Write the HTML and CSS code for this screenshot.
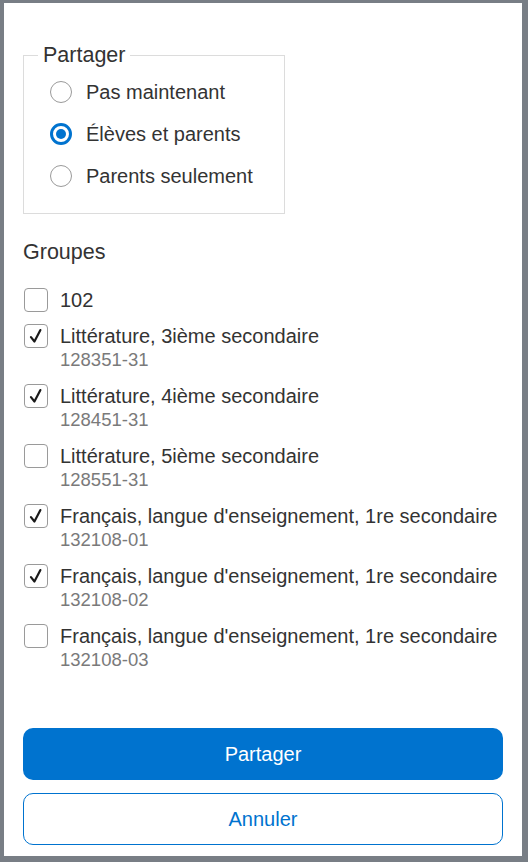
FILE: index.html
```html
<!DOCTYPE html>
<html lang="fr">
<head>
<meta charset="utf-8">
<title>Partager</title>
<link rel="stylesheet" href="styles.css">
</head>
<body>
<div class="dialog">
  <fieldset class="share">
    <legend class="share-legend">Partager</legend>
    <div class="radios">
      <label class="radio-row"><span class="radio"></span><span class="radio-label">Pas maintenant</span></label>
      <label class="radio-row"><span class="radio radio-checked"></span><span class="radio-label">Élèves et parents</span></label>
      <label class="radio-row"><span class="radio"></span><span class="radio-label">Parents seulement</span></label>
    </div>
  </fieldset>

  <h2 class="groups-title">Groupes</h2>

  <ul class="groups">
    <li class="group">
      <span class="box"></span>
      <div class="group-text"><div class="group-name">102</div></div>
    </li>
    <li class="group">
      <span class="box"><svg class="check" viewBox="0 0 24 24"><path d="M6.5 13.2 L10.3 18 L16.8 5.5"/></svg></span>
      <div class="group-text"><div class="group-name">Littérature, 3ième secondaire</div><div class="group-code">128351-31</div></div>
    </li>
    <li class="group">
      <span class="box"><svg class="check" viewBox="0 0 24 24"><path d="M6.5 13.2 L10.3 18 L16.8 5.5"/></svg></span>
      <div class="group-text"><div class="group-name">Littérature, 4ième secondaire</div><div class="group-code">128451-31</div></div>
    </li>
    <li class="group">
      <span class="box"></span>
      <div class="group-text"><div class="group-name">Littérature, 5ième secondaire</div><div class="group-code">128551-31</div></div>
    </li>
    <li class="group">
      <span class="box"><svg class="check" viewBox="0 0 24 24"><path d="M6.5 13.2 L10.3 18 L16.8 5.5"/></svg></span>
      <div class="group-text"><div class="group-name">Français, langue d'enseignement, 1re secondaire</div><div class="group-code">132108-01</div></div>
    </li>
    <li class="group">
      <span class="box"><svg class="check" viewBox="0 0 24 24"><path d="M6.5 13.2 L10.3 18 L16.8 5.5"/></svg></span>
      <div class="group-text"><div class="group-name">Français, langue d'enseignement, 1re secondaire</div><div class="group-code">132108-02</div></div>
    </li>
    <li class="group">
      <span class="box"></span>
      <div class="group-text"><div class="group-name">Français, langue d'enseignement, 1re secondaire</div><div class="group-code">132108-03</div></div>
    </li>
  </ul>

  <div class="actions">
    <button class="btn btn-primary">Partager</button>
    <button class="btn btn-secondary">Annuler</button>
  </div>
</div>
</body>
</html>
```

FILE: styles.css
```css
* { box-sizing: border-box; }

html, body {
  margin: 0;
  padding: 0;
  height: 100%;
}

body {
  background: #787e85;
  padding: 3px 6px 6px 4px;
  font-family: "Liberation Sans", Arial, sans-serif;
  color: #333333;
}

.dialog {
  background: #ffffff;
  height: 853px;
  padding: 0 19px 11px 19px;
  display: flex;
  flex-direction: column;
}

.share {
  margin: 41px 0 0 0;
  padding: 0 0 16px 0;
  width: 262px;
  border: 1px solid #dcdcdc;
  min-width: 0;
}

.share-legend {
  margin-left: 14px;
  padding: 0 5px;
  font-size: 21.5px;
  line-height: 22px;
  color: #333333;
}

.radios {
  padding: 5px 0 0 26px;
  display: flex;
  flex-direction: column;
}

.radio-row {
  height: 42px;
  display: flex;
  align-items: center;
  gap: 14px;
}

.radio {
  width: 22px;
  height: 22px;
  border-radius: 50%;
  border: 1px solid #9a9a9a;
  background: #fff;
  flex: none;
  display: flex;
  align-items: center;
  justify-content: center;
}

.radio-checked {
  border: 3px solid #0073cf;
}

.radio-checked::after {
  content: "";
  width: 10px;
  height: 10px;
  border-radius: 50%;
  background: #0073cf;
}

.radio-label {
  font-size: 20px;
  line-height: 22px;
  color: #333333;
}

.groups-title {
  margin: 27px 0 0 0;
  font-size: 21.5px;
  line-height: 22px;
  font-weight: normal;
  color: #333333;
}

.groups {
  list-style: none;
  margin: 25px 0 0 0;
  padding: 0 0 0 1px;
  display: flex;
  flex-direction: column;
  gap: 12px;
}

.group {
  display: flex;
  align-items: flex-start;
  gap: 12px;
}

.box {
  width: 24px;
  height: 24px;
  flex: none;
  border: 1px solid #9a9a9a;
  border-radius: 4px;
  background: #fff;
  display: flex;
  align-items: center;
  justify-content: center;
}

.check {
  width: 22px;
  height: 22px;
  fill: none;
  stroke: #1a1a1a;
  stroke-width: 2.4;
  stroke-linecap: round;
  stroke-linejoin: round;
}

.group-text {
  display: flex;
  flex-direction: column;
}

.group-name {
  font-size: 20px;
  line-height: 24px;
  color: #333333;
}

.group-code {
  font-size: 18.5px;
  line-height: 24px;
  color: #7a7a7a;
}

.actions {
  margin-top: auto;
  display: flex;
  flex-direction: column;
  gap: 13px;
}

.btn {
  height: 52px;
  border-radius: 10px;
  font-family: "Liberation Sans", Arial, sans-serif;
  font-size: 20px;
  width: 100%;
  cursor: pointer;
}

.btn-primary {
  background: #0073cf;
  color: #ffffff;
  border: none;
}

.btn-secondary {
  background: #ffffff;
  color: #0073cf;
  border: 1px solid #0073cf;
}
```
